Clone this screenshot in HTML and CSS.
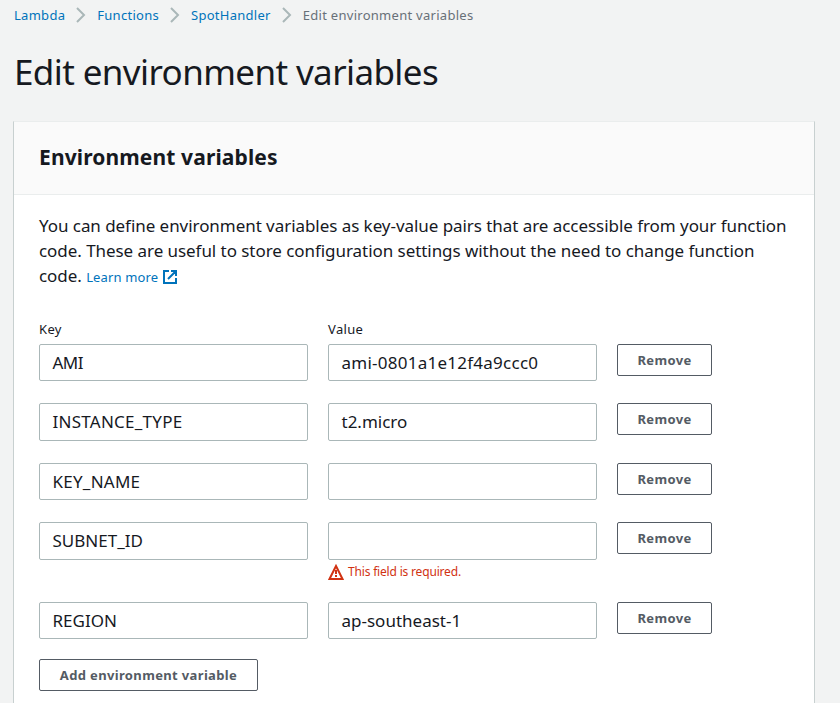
FILE: index.html
```html
<!DOCTYPE html>
<html lang="en"><head><meta charset="utf-8"><title>Edit environment variables</title><link rel="stylesheet" href="styles.css"></head>
<body>
<nav class="crumbs">
<a>Lambda</a><svg class="chev" viewBox="0 0 10 16"><path d="M1 1l7 7-7 7"/></svg>
<a>Functions</a><svg class="chev" viewBox="0 0 10 16"><path d="M1 1l7 7-7 7"/></svg>
<a>SpotHandler</a><svg class="chev" viewBox="0 0 10 16"><path d="M1 1l7 7-7 7"/></svg>
<span>Edit environment variables</span>
</nav>
<h1>Edit environment variables</h1>
<main class="card">
<header><h2>Environment variables</h2></header>
<section>
<p class="intro">You can define environment variables as key-value pairs that are accessible from your function<br>code. These are useful to store configuration settings without the need to change function<br>code. <a class="learn">Learn more</a><svg class="ext" viewBox="0 0 14 14"><path d="M6 1H1v12h12V8M8 1h5v5M13 1L5 9"/></svg></p>
<div class="row labels"><label>Key</label><label>Value</label></div>
<div class="row"><div class="input tight">AMI</div><div class="input wide">ami-0801a1e12f4a9ccc0</div><button>Remove</button></div>
<div class="row"><div class="input wide">INSTANCE_TYPE</div><div class="input">t2.micro</div><button>Remove</button></div>
<div class="row"><div class="input wide">KEY_NAME</div><div class="input"></div><button>Remove</button></div>
<div class="row"><div class="input">SUBNET_ID</div><div><div class="input"></div><div class="error"><svg viewBox="0 0 16 16"><path d="M8 2L14.500 15H1.500Z"/><path d="M8 6v4M8 11v2"/></svg><span>This field is required.</span></div></div><button>Remove</button></div>
<div class="row"><div class="input">REGION</div><div class="input">ap-southeast-1</div><button>Remove</button></div>
<button class="add">Add environment variable</button>
</section>
</main>
</body></html>
```
FILE: styles.css
```css
*{box-sizing:border-box}
body{margin:0;height:703px;overflow:hidden;background:#f2f3f3;color:#16191f;font-family:"Noto Sans",sans-serif}
.crumbs{display:flex;align-items:center;height:30px;padding-left:14px;font-size:13px;letter-spacing:.28px;color:#687078;white-space:nowrap}
a{color:#0073bb}
.chev{width:10px;height:16px;margin:0 11px;fill:none;stroke:#aab7b8;stroke-width:2}
h1{margin:0;padding-left:14px;height:91px;line-height:84px;font-size:35px;font-weight:400;letter-spacing:-.61px;white-space:nowrap}
.card{width:802px;margin-left:13px;height:600px;background:#fff;border:1px solid #c8d0d0;border-top-color:#eaeded}
header{height:73px;padding:0 25px;background:#fafafa;border-bottom:1px solid #eaeded}
h2{margin:0;font-size:21px;line-height:70px;font-weight:700;letter-spacing:.12px}
section{padding:18px 25px}
.intro{margin:0;font-size:17px;line-height:25px;letter-spacing:-.053px;white-space:nowrap}
.learn{font-size:13px;letter-spacing:.15px}
.ext{width:14px;height:14px;margin-left:5px;vertical-align:-2px;fill:none;stroke:#0073bb;stroke-width:2}
.row{display:grid;grid-template-columns:269px 269px 95px;column-gap:20px;align-items:start;margin-bottom:22px}
.labels{margin:29px 0 4px;font-size:13px;line-height:21px;letter-spacing:.35px}
.input{height:37.4px;border:1px solid #aab7b8;border-radius:2px;padding-left:12.5px;font-size:17px;line-height:36px}
.wide{letter-spacing:.25px}
.tight{letter-spacing:-.5px}
button{height:32px;padding:0;background:#fff;border:1px solid #545b64;border-radius:2px;color:#545b64;font:700 13px "Noto Sans",sans-serif;letter-spacing:.35px}
.error{display:flex;align-items:center;height:20px;padding-top:4px;font-size:12px;letter-spacing:-.18px;color:#d13212}
.error svg{flex:none;width:16px;height:16px;margin-right:4px;fill:none;stroke:#d13212;stroke-width:2}
.add{width:219px;display:block;margin-top:-2px}
```
